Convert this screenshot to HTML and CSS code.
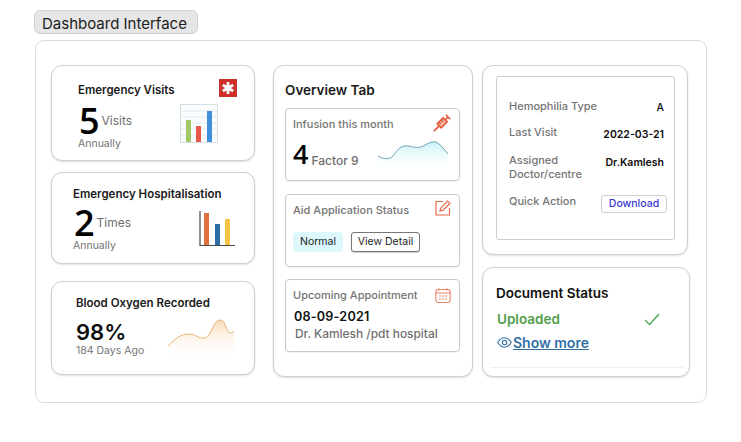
FILE: index.html
```html
<!DOCTYPE html>
<html lang="en">
<head>
<meta charset="utf-8">
<title>Dashboard Interface</title>
<link rel="stylesheet" href="styles.css">
</head>
<body>
<div class="page">
  <div class="chip">Dashboard Interface</div>
  <main class="panel">
    <section class="col-left">
      <article class="card stat stat-visits">
        <div class="stat-head"><h3>Emergency Visits</h3>
          <svg class="asterisk" width="18" height="18" viewBox="0 0 18 18"><rect width="18" height="18" fill="#cc2f27"/><path d="M9 3v12M3.8 6l10.4 6M14.2 6L3.8 12" stroke="#fff" stroke-width="2.8"/></svg>
        </div>
        <div class="stat-body">
          <div class="stat-text">
            <div class="stat-line"><span class="big">5</span><span class="unit">Visits</span></div>
            <div class="sub">Annually</div>
          </div>
          <svg class="chart-a" width="38" height="39" viewBox="0 0 38 39">
            <rect x=".5" y=".5" width="37" height="38" fill="#fafcfd" stroke="#d5e0e4"/>
            <path d="M1 7h36M1 13h36M1 19h36M1 25h36M1 31h36" stroke="#e3ecef" stroke-width="1"/>
            <rect x="6" y="16" width="5" height="22" fill="#a3c868"/>
            <rect x="16" y="22" width="5" height="16" fill="#e8574a"/>
            <rect x="27" y="7" width="5" height="31" fill="#3f90dd"/>
          </svg>
        </div>
      </article>
      <article class="card stat stat-hosp">
        <h3>Emergency Hospitalisation</h3>
        <div class="stat-body">
          <div class="stat-text">
            <div class="stat-line"><span class="big">2</span><span class="unit">Times</span></div>
            <div class="sub">Annually</div>
          </div>
          <svg class="chart-b" width="36" height="36" viewBox="0 0 36 36">
            <rect x="5" y="2" width="5" height="32" fill="#df6f3e"/>
            <rect x="16" y="13" width="5" height="21" fill="#2f6ea5"/>
            <rect x="26" y="8" width="5" height="26" fill="#f7c544"/>
            <path d="M1 0v34.5h35" fill="none" stroke="#4a4a4a" stroke-width="1.2"/>
          </svg>
        </div>
      </article>
      <article class="card stat stat-oxygen">
        <h3>Blood Oxygen Recorded</h3>
        <div class="stat-body">
          <div class="stat-text">
            <div class="pct">98%</div>
            <div class="sub sub-days">184 Days Ago</div>
          </div>
          <svg class="spark-o" width="66" height="40" viewBox="0 0 66 40">
            <defs><linearGradient id="go" x1="0" y1="0" x2="0" y2="1"><stop offset="0" stop-color="#f6cfa0" stop-opacity=".75"/><stop offset="1" stop-color="#fff" stop-opacity="0"/></linearGradient></defs>
            <path d="M0 27C8 19 13 15 21 15C28 15 30 20 37 19C44 17 45 1 52 1C58 1 58 13 62 14C64 14 65 13 66 12V40H0Z" fill="url(#go)"/>
            <path d="M0 27C8 19 13 15 21 15C28 15 30 20 37 19C44 17 45 1 52 1C58 1 58 13 62 14C64 14 65 13 66 12" fill="none" stroke="#e9b574" stroke-width="1"/>
          </svg>
        </div>
      </article>
    </section>

    <section class="card col-mid">
      <h2>Overview Tab</h2>
      <div class="sub-card">
        <div class="sub-head"><span>Infusion this month</span>
          <svg class="ico" width="18" height="18" viewBox="0 0 18 18" fill="none" stroke="#e4573a"><g transform="rotate(-45 9 9)"><rect x="5" y="6.2" width="8.5" height="5.6" fill="#f6b8a6" stroke-width="1.6"/><path d="M-2.5 9H5M13.5 9h4M17.5 5.8v6.4" stroke-width="1.6"/><path d="M7.5 6v2.8M10.5 6v2.8" stroke-width="1.2"/></g></svg>
        </div>
        <div class="infusion">
          <span class="num">4</span><span class="unit-f">Factor 9</span>
          <svg class="spark-i" width="72" height="32" viewBox="0 0 72 32">
            <defs><linearGradient id="gi" x1="0" y1="0" x2="0" y2="1"><stop offset="0" stop-color="#bdeef5" stop-opacity=".85"/><stop offset="1" stop-color="#fff" stop-opacity="0"/></linearGradient></defs>
            <path d="M0 17C5 20 11 21 15 17C20 10 23 6 31 7C38 9 42 9 47 6C53 3 57 1 61 5C65 8 68 13 70 15V32H0Z" fill="url(#gi)"/>
            <path d="M0 17C5 20 11 21 15 17C20 10 23 6 31 7C38 9 42 9 47 6C53 3 57 1 61 5C65 8 68 13 70 15" fill="none" stroke="#5d9aa6" stroke-width=".9"/>
          </svg>
        </div>
      </div>
      <div class="sub-card">
        <div class="sub-head"><span>Aid Application Status</span>
          <svg class="ico" width="16" height="16" viewBox="0 0 16 16" fill="none" stroke="#e4694a" stroke-width="1.2"><path d="M8 1.5H1v13.5h13.5V8"/><path d="M5 11l.6-2.8L12.6 1.2l2.2 2.2-7 7z"/></svg>
        </div>
        <div class="actions"><span class="tag">Normal</span><button class="btn-outline">View Detail</button></div>
      </div>
      <div class="sub-card">
        <div class="sub-head"><span>Upcoming Appointment</span>
          <svg class="ico-cal" width="16" height="15" viewBox="0 0 16 15" fill="none" stroke="#e98368" stroke-width="1.1"><rect x=".8" y="1.5" width="14.4" height="13" rx="2.5"/><path d="M.8 5h14.4M4 .2v2.4M12 .2v2.4"/><path d="M4 8h2M7 8h2M10 8h2M4 11h2M7 11h2M10 11h2" stroke-width="1"/></svg>
        </div>
        <div class="date">08-09-2021</div>
        <div class="doctor">Dr. Kamlesh /pdt hospital</div>
      </div>
    </section>

    <section class="col-right">
      <div class="card info-card">
        <div class="info-box">
          <div class="row row-type"><span class="label">Hemophilia Type</span><span class="value">A</span></div>
          <div class="row row-visit"><span class="label">Last Visit</span><span class="value">2022-03-21</span></div>
          <div class="row row-doc"><span class="label">Assigned<br>Doctor/centre</span><span class="value">Dr.Kamlesh</span></div>
          <div class="row row-action"><span class="label">Quick Action</span><button class="btn-dl">Download</button></div>
        </div>
      </div>
      <div class="card doc-card">
        <h2>Document Status</h2>
        <div class="upload-row"><span class="uploaded">Uploaded</span>
          <svg width="16" height="13" viewBox="0 0 16 13" fill="none" stroke="#4aa65a" stroke-width="1.4"><path d="M1 7l4.5 4.5L15 1"/></svg>
        </div>
        <div class="more">
          <svg width="15" height="11" viewBox="0 0 15 11" fill="none" stroke="#2f6fa5" stroke-width="1.1"><path d="M.7 5.5C3 2 5 .8 7.5.8S12 2 14.3 5.5C12 9 10 10.2 7.5 10.2S3 9 .7 5.5z"/><circle cx="7.5" cy="5.5" r="2.2"/></svg>
          <a class="more-link" href="#">Show more</a>
        </div>
        <div class="doc-rule"></div>
      </div>
    </section>
  </main>
</div>
</body>
</html>
```
FILE: styles.css
```css
* { box-sizing: border-box; }
html, body { margin: 0; padding: 0; background: #fff; }
body { font-family: "Inter", "Open Sans", sans-serif; color: #111; width: 741px; height: 442px; overflow: hidden; }
h2, h3 { margin: 0; }
.page { padding: 10px 34px 0 34px; }
.chip {
  width: 164px; height: 24px; background: #e6e6e6; border: 1px solid #cfcfcf; border-radius: 6px;
  font: 400 15px/25px "Inter", sans-serif; color: #1c1c1c; padding-left: 7px;
}
.panel {
  margin: 6px 0 0 1px; width: 672px; height: 363px; border: 1px solid #dcdcdc; border-radius: 9px;
  padding: 24px 0 0 15px; display: flex; align-items: flex-start;
}
.card { background: #fff; border: 1px solid #cfcfcf; border-radius: 11px; box-shadow: 0 1px 2px rgba(0,0,0,.12); }
.col-left { width: 204px; display: flex; flex-direction: column; }
.stat h3 { font-size: 11.5px; font-weight: 600; line-height: 16px; color: #1a1a1a; }
.stat-visits { height: 96px; padding: 13px 17px 0 26px; }
.stat-hosp { height: 92px; margin-top: 11px; padding: 13px 19px 0 21px; }
.stat-oxygen { height: 94px; margin-top: 17px; padding: 13px 20px 0 24px; }
.stat-head { display: flex; justify-content: space-between; align-items: flex-start; }
.stat-head h3 { margin-top: 3px; }
.asterisk { display: block; }
.stat-body { display: flex; justify-content: space-between; align-items: flex-start; }
.stat-visits .stat-body { justify-content: flex-start; }
.stat-visits .stat-text { width: 102px; padding-top: 7px; }
.stat-hosp .stat-text { padding-top: 5px; }
.stat-line { display: flex; align-items: flex-start; height: 31px; }
.big { font-size: 36px; font-weight: 600; line-height: 31px; color: #000; font-family: "Open Sans", sans-serif; margin-left: 1px; }
.unit { font-size: 12px; color: #6e6e6e; margin: 8px 0 0 2px; line-height: 16px; }
.sub { font-size: 10.5px; color: #737373; line-height: 14px; margin-top: 1px; }
.chart-a { margin-top: 6px; }
.chart-b { margin-top: 9px; }
.pct { font-size: 22px; font-weight: 600; line-height: 26px; color: #0d0d0d; margin-top: 8px; }
.sub-days { margin-top: -1px; color: #777; }
.spark-o { margin-top: 8px; }
.col-mid { width: 200px; height: 312px; margin-left: 18px; padding: 15px 12px 0 11px; }
.col-mid h2 { font-size: 13.5px; font-weight: 600; line-height: 18px; color: #1a1a1a; }
.sub-card { width: 175px; height: 73px; border: 1px solid #c9c9c9; border-radius: 4px; margin-top: 13px; padding: 7px 8px 0 7px; box-shadow: 0 1px 1px rgba(0,0,0,.06); }
.col-mid h2 + .sub-card { margin-top: 9px; }
.sub-card:last-child { margin-top: 12px; }
.sub-head { display: flex; justify-content: space-between; align-items: flex-start; height: 16px; font-size: 11px; color: #757575; line-height: 16px; }
.sub-head span { font-weight: 500; }
.ico { margin-top: -2px; flex: none; }
.ico-cal { margin-top: 1px; flex: none; }
.infusion { display: flex; align-items: flex-end; margin-top: 5px; }
.num { font-size: 27px; font-weight: 600; line-height: 34px; color: #000; font-family: "Open Sans", sans-serif; }
.unit-f { font-size: 12px; font-weight: 500; color: #6e6e6e; margin: 0 0 2px 3px; line-height: 16px; }
.spark-i { margin-left: auto; margin-right: 1px; }
.actions { display: flex; align-items: center; gap: 8px; margin-top: 14px; }
.tag { width: 50px; height: 20px; background: #dcf8fc; border-radius: 4px; font-size: 10.5px; font-weight: 400; line-height: 20px; text-align: center; color: #1c1c1c; }
.btn-outline { width: 69px; height: 20px; padding: 0; background: #fff; border: 1px solid #777; border-radius: 3px; font: 400 10.5px/18px "Inter", sans-serif; color: #222; box-shadow: 0 1px 1px rgba(0,0,0,.2); }
.date { font-size: 12.6px; font-weight: 600; line-height: 16px; color: #111; letter-spacing: .2px; margin: 6px 0 0 1px; }
.doctor { font-size: 11.9px; color: #6f6f6f; line-height: 16px; margin: 1px 0 0 2px; font-weight: 500; }
.col-right { width: 208px; margin-left: 9px; display: flex; flex-direction: column; }
.info-card { width: 206px; height: 190px; padding: 10px 13px 0 13px; }
.info-box { width: 179px; height: 164px; border: 1px solid #cdcdcd; border-radius: 3px; padding: 0 10px 0 12px; }
.row { display: flex; justify-content: space-between; align-items: flex-start; font-size: 10.5px; line-height: 14px; }
.label { color: #757575; font-weight: 500; font-size: 11px; }
.value { color: #0e0e0e; font-weight: 600; }
.row-type { margin-top: 22px; }
.row-type .value { margin-top: 2px; font-weight: 500; }
.row-visit { margin-top: 10px; }
.row-visit .value { margin-top: 3px; }
.row-doc { margin-top: 11px; }
.row-doc .value { margin-top: 3px; }
.row-action { margin-top: 13px; margin-right: -3px; }
.btn-dl { width: 66px; height: 18px; padding: 0; margin-top: 1px; background: #fff; border: 1px solid #cfcfcf; border-radius: 3px; font: 500 10.5px/16px "Inter", sans-serif; color: #3a3bd0; }
.doc-card { width: 208px; height: 110px; margin-top: 12px; padding: 17px 7px 0 13px; }
.doc-card h2 { font-size: 13.5px; font-weight: 600; line-height: 17px; color: #111; }
.upload-row { display: flex; justify-content: space-between; align-items: center; margin: 9px 0 0 1px; padding-right: 22px; }
.uploaded { font-size: 13.5px; font-weight: 600; color: #52a04c; line-height: 17px; }
.more { display: flex; align-items: center; gap: 1px; margin: 6px 0 0 1px; }
.more-link { font-size: 14px; font-weight: 600; color: #2f6fa5; line-height: 17px; text-decoration: underline; }
.doc-rule { height: 1px; background: #eeeeee; margin: 16px 0 0 -6px; width: 193px; }
```
